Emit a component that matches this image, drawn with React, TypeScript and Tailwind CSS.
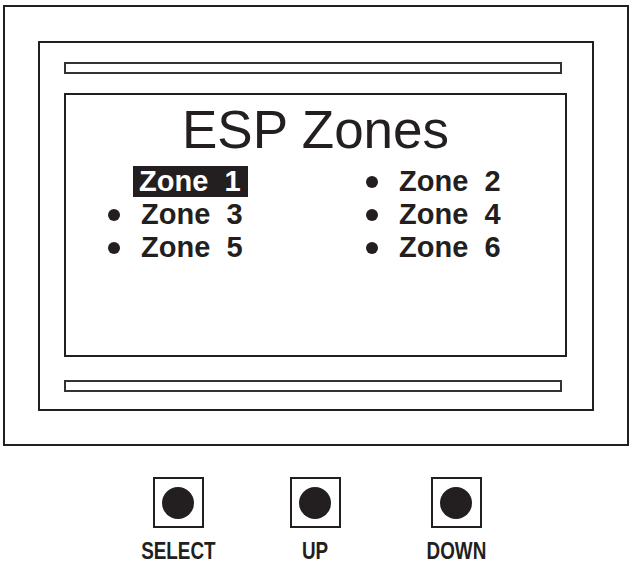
import React from 'react';

type Zone = { id: number; selected?: boolean };

const ZONES: Zone[] = [
  { id: 1, selected: true },
  { id: 2 },
  { id: 3 },
  { id: 4 },
  { id: 5 },
  { id: 6 },
];

const BUTTONS = [
  { label: 'SELECT', ml: 'ml-[125px]' },
  { label: 'UP', ml: 'ml-[37px]' },
  { label: 'DOWN', ml: 'ml-[41px]' },
];

const ZoneItem: React.FC<{ zone: Zone }> = ({ zone }) => (
  <div className="flex h-[33px] items-center">
    <span
      className={`h-[12px] w-[12px] shrink-0 rounded-full ${zone.selected ? 'bg-transparent' : 'bg-[#231f20]'}`}
    />
    {zone.selected ? (
      <span className="ml-[13px] whitespace-pre bg-[#231f20] pl-[6px] pr-[7px] leading-[31px] text-white">
        {`Zone  ${zone.id}`}
      </span>
    ) : (
      <span className="ml-[21px] whitespace-pre leading-[31px]">{`Zone  ${zone.id}`}</span>
    )}
  </div>
);

const App: React.FC = () => {
  return (
    <div
      className="h-[572px] w-[632px] bg-white pl-[3px] pt-[5px] text-[#231f20]"
      style={{ fontFamily: '"Liberation Sans", Arial, sans-serif' }}
    >
      {/* housing */}
      <div className="h-[441px] w-[626px] border-2 border-[#231f20] pl-[33px] pt-[34px]">
        {/* bezel */}
        <div className="h-[370px] w-[556px] border-2 border-[#231f20] pl-[24px] pt-[19px]">
          <div className="h-[12px] w-[498px] border-2 border-[#333]" />

          {/* display */}
          <div className="mt-[19px] h-[264px] w-[503px] border-2 border-[#231f20]">
            <div className="mt-[8px] text-center text-[53px] leading-[53px]">ESP Zones</div>
            <div className="mt-[9px] grid grid-cols-[258px_auto] pl-[42px] text-[29px] font-bold">
              {ZONES.map((z) => (
                <ZoneItem key={z.id} zone={z} />
              ))}
            </div>
          </div>

          <div className="mt-[23px] h-[12px] w-[498px] border-2 border-[#333]" />
        </div>
      </div>

      {/* front panel keys */}
      <div className="mt-[31px] flex">
        {BUTTONS.map((b) => (
          <div key={b.label} className={`flex w-[100px] flex-col items-center ${b.ml}`}>
            <div className="flex h-[51px] w-[51px] items-center justify-center border-2 border-[#231f20]">
              <div className="h-[32px] w-[32px] rounded-full bg-[#231f20]" />
            </div>
            <div className="mt-[10px] inline-block scale-x-[0.82] text-[23px] font-bold leading-[26px]">
              {b.label}
            </div>
          </div>
        ))}
      </div>
    </div>
  );
};

export default App;
